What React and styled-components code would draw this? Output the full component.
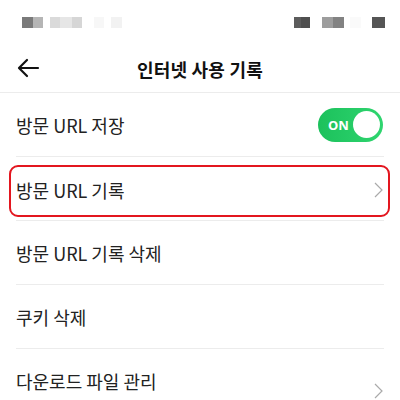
import React from "react";
import styled, { createGlobalStyle } from "styled-components";

const Global = createGlobalStyle`
  body {
    margin: 0;
    background: #fff;
    font-family: "Noto Sans CJK KR", "Noto Sans", sans-serif;
  }
`;

const Screen = styled.div`
  width: 400px;
  height: 400px;
  overflow: hidden;
  background: #fff;
`;

const StatusBar = styled.div`
  height: 44px;
  display: flex;
  justify-content: space-between;
  align-items: flex-start;
  padding: 17px 15px 0 22px;
  box-sizing: border-box;
`;

const Pixels = styled.div`
  display: flex;
  height: 11px;
`;

const Pixel = styled.span`
  width: ${({ w }) => w}px;
  margin-left: ${({ gap }) => gap || 0}px;
  background: ${({ c }) => c};
`;

const Header = styled.header`
  height: 49px;
  display: flex;
  align-items: center;
  justify-content: center;
  position: relative;
  border-bottom: 1px solid #ececec;
  box-sizing: border-box;
`;

const Back = styled.button`
  position: absolute;
  left: 16px;
  top: 12px;
  width: 24px;
  height: 24px;
  padding: 0;
  border: 0;
  background: none;
  display: flex;
`;

const Title = styled.h1`
  margin: 0 0 -1px;
  font-size: 18px;
  font-weight: 700;
  color: #111;
  letter-spacing: 0.2px;
`;

const List = styled.ul`
  list-style: none;
  margin: 0;
  padding: 0 16px;
`;

const Row = styled.li`
  position: relative;
  height: 64px;
  display: flex;
  align-items: center;
  justify-content: space-between;
  border-bottom: ${({ last }) => (last ? "none" : "1px solid #ececec")};
  box-sizing: border-box;

  ${({ marked }) =>
    marked &&
    `
    &::after {
      content: "";
      position: absolute;
      left: -7px;
      right: -6px;
      top: 8px;
      bottom: 3px;
      border: 2.5px solid #e3161f;
      border-radius: 9px;
    }
  `}
`;

const Label = styled.span`
  font-size: 18px;
  color: #222;
  margin-top: ${({ shift }) => shift || 0}px;
`;

const Toggle = styled.div`
  width: 65px;
  height: 34px;
  border-radius: 17px;
  background: linear-gradient(90deg, #1cc15c, #2fd56f);
  display: flex;
  align-items: center;
  justify-content: space-between;
  padding: 0 3px 0 10px;
  box-sizing: border-box;
  margin-right: 1px;
`;

const ToggleText = styled.span`
  font-family: "Noto Sans", sans-serif;
  font-size: 13px;
  font-weight: 700;
  color: #fff;
`;

const Knob = styled.span`
  width: 27px;
  height: 27px;
  border-radius: 50%;
  background: #fff;
`;

const Chevron = styled.svg`
  width: 9px;
  height: 16px;
  margin-right: 1px;
  margin-top: ${({ shift }) => shift || 0}px;
`;

function Arrow() {
  return (
    <svg width="24" height="24" viewBox="0 0 24 24" fill="none">
      <path d="M22 12H4M11 4l-8 8 8 8" stroke="#111" strokeWidth="2.2" strokeLinecap="round" strokeLinejoin="round" />
    </svg>
  );
}

function Next({ shift }) {
  return (
    <Chevron viewBox="0 0 9 16" shift={shift}>
      <path d="M1 1l7 7-7 7" stroke="#aaa" strokeWidth="1.2" fill="none" />
    </Chevron>
  );
}

export default function App() {
  return (
    <Screen>
      <Global />
      <StatusBar>
        <Pixels>
          <Pixel w={11} c="#7a7a7a" />
          <Pixel w={10} c="#b5b5b5" />
          <Pixel w={10} gap={7} c="#dadada" />
          <Pixel w={12} c="#e6e6e6" />
          <Pixel w={10} c="#d6d6d6" />
          <Pixel w={10} gap={12} c="#f7f7f7" />
          <Pixel w={11} gap={7} c="#f2f2f2" />
        </Pixels>
        <Pixels>
          <Pixel w={7} c="#5c5c5c" />
          <Pixel w={9} c="#4f4f4f" />
          <Pixel w={11} gap={12} c="#9d9d9d" />
          <Pixel w={11} c="#828282" />
          <Pixel w={11} gap={6} c="#fafafa" />
          <Pixel w={13} gap={11} c="#555" />
        </Pixels>
      </StatusBar>
      <Header>
        <Back aria-label="back">
          <Arrow />
        </Back>
        <Title>인터넷 사용 기록</Title>
      </Header>
      <List>
        <Row>
          <Label>방문 URL 저장</Label>
          <Toggle>
            <ToggleText>ON</ToggleText>
            <Knob />
          </Toggle>
        </Row>
        <Row marked>
          <Label shift={2}>방문 URL 기록</Label>
          <Next shift={3} />
        </Row>
        <Row>
          <Label>방문 URL 기록 삭제</Label>
        </Row>
        <Row>
          <Label>쿠키 삭제</Label>
        </Row>
        <Row last>
          <Label>다운로드 파일 관리</Label>
          <Next shift={20} />
        </Row>
      </List>
    </Screen>
  );
}
